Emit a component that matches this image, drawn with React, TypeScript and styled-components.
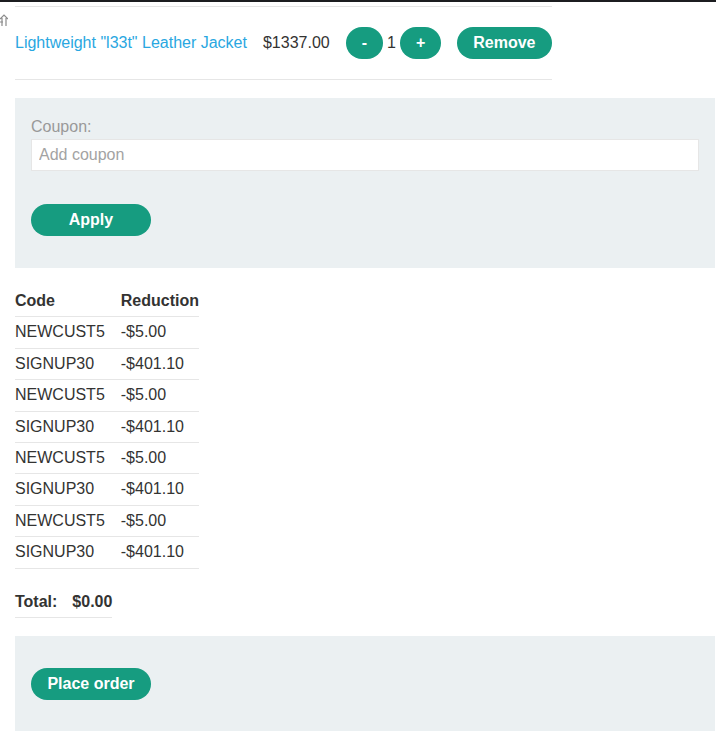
import styled, { createGlobalStyle } from "styled-components";

const GlobalStyle = createGlobalStyle`
    body {
        margin: 0;
        font-family: "Liberation Sans", Arial, sans-serif;
        font-size: 16px;
        color: #333332;
        background: #fff;
    }
    * { box-sizing: border-box; }
`;

const TopBar = styled.div`
    height: 2px;
    background-color: #1c1d20;
`;

const Page = styled.div`
    position: relative;
    width: 716px;
    padding: 4px 1px 0 15px;
`;

const EdgeIcon = styled.svg`
    position: absolute;
    left: 0;
    top: 12px;
    width: 8px;
    height: 13px;
`;

const CartRow = styled.div`
    width: 537px;
    height: 74px;
    border-top: 1px solid #e6e6e6;
    border-bottom: 1px solid #e6e6e6;
    display: flex;
    align-items: center;
    gap: 16px;
    white-space: nowrap;
`;

const ProductLink = styled.a`
    color: #29a7e1;
    text-decoration: none;
`;

const Qty = styled.div`
    display: flex;
    align-items: center;
    gap: 4px;
`;

const Button = styled.button<{ $wide?: boolean }>`
    height: 32px;
    padding: 0 16px;
    min-width: ${(p) => (p.$wide ? "120px" : "0")};
    border: none;
    border-radius: 20px;
    background-color: #169c80;
    color: #fff;
    font-family: "Liberation Sans", Arial, sans-serif;
    font-size: 16px;
    font-weight: bold;
    cursor: pointer;
`;

const Panel = styled.div<{ $gap?: number }>`
    width: 700px;
    background-color: #ebf0f2;
    padding: 16px 16px 32px;
    display: flex;
    flex-direction: column;
    align-items: flex-start;
    margin-top: ${(p) => p.$gap ?? 18}px;
`;

const OrderPanel = styled(Panel)`
    padding: 32px 16px 31px;
`;

const Label = styled.label`
    color: #999;
    line-height: 25px;
`;

const Input = styled.input`
    width: 100%;
    height: 32px;
    border: 1px solid #e6e6e6;
    background: #fff;
    padding: 0 7px;
    font-family: "Liberation Sans", Arial, sans-serif;
    font-size: 16px;
    color: #333332;
    margin-bottom: 33px;
    outline: none;
    &::placeholder {
        color: #a3a3a3;
    }
`;

const Table = styled.table<{ $top: number }>`
    border-collapse: collapse;
    margin-top: ${(p) => p.$top}px;
    th, td {
        text-align: left;
        padding: 6px 16px 6px 0;
        border-bottom: 1px solid #e6e6e6;
        line-height: 18.4px;
    }
    th:last-child, td:last-child {
        padding-right: 0;
    }
    th {
        padding-top: 8px;
        font-weight: bold;
    }
`;

const TotalTable = styled(Table)`
    th:first-child {
        padding-right: 15px;
    }
    th {
        padding-top: 6px;
    }
`;

const coupons = [
    { code: "NEWCUST5", reduction: "-$5.00" },
    { code: "SIGNUP30", reduction: "-$401.10" },
    { code: "NEWCUST5", reduction: "-$5.00" },
    { code: "SIGNUP30", reduction: "-$401.10" },
    { code: "NEWCUST5", reduction: "-$5.00" },
    { code: "SIGNUP30", reduction: "-$401.10" },
    { code: "NEWCUST5", reduction: "-$5.00" },
    { code: "SIGNUP30", reduction: "-$401.10" },
];

export default function App() {
    return (
        <>
            <GlobalStyle />
            <TopBar />
            <Page>
                <EdgeIcon viewBox="0 0 8 13" fill="none" stroke="#8a8a8a" strokeWidth="1.2">
                    <path d="M0 5 L4 1 L8 5 M2 4 V12 M6 4 V12 M0 8 H3" />
                </EdgeIcon>
                <CartRow>
                    <ProductLink href="#">Lightweight "l33t" Leather Jacket</ProductLink>
                    <span>$1337.00</span>
                    <Qty>
                        <Button>-</Button>
                        <span>1</span>
                        <Button>+</Button>
                    </Qty>
                    <Button>Remove</Button>
                </CartRow>

                <Panel>
                    <Label htmlFor="coupon">Coupon:</Label>
                    <Input id="coupon" placeholder="Add coupon" />
                    <Button $wide>Apply</Button>
                </Panel>

                <Table $top={16}>
                    <thead>
                        <tr>
                            <th>Code</th>
                            <th>Reduction</th>
                        </tr>
                    </thead>
                    <tbody>
                        {coupons.map((c, i) => (
                            <tr key={i}>
                                <td>{c.code}</td>
                                <td>{c.reduction}</td>
                            </tr>
                        ))}
                    </tbody>
                </Table>

                <TotalTable $top={18}>
                    <tbody>
                        <tr>
                            <th>Total:</th>
                            <th>$0.00</th>
                        </tr>
                    </tbody>
                </TotalTable>

                <OrderPanel>
                    <Button $wide>Place order</Button>
                </OrderPanel>
            </Page>
        </>
    );
}
